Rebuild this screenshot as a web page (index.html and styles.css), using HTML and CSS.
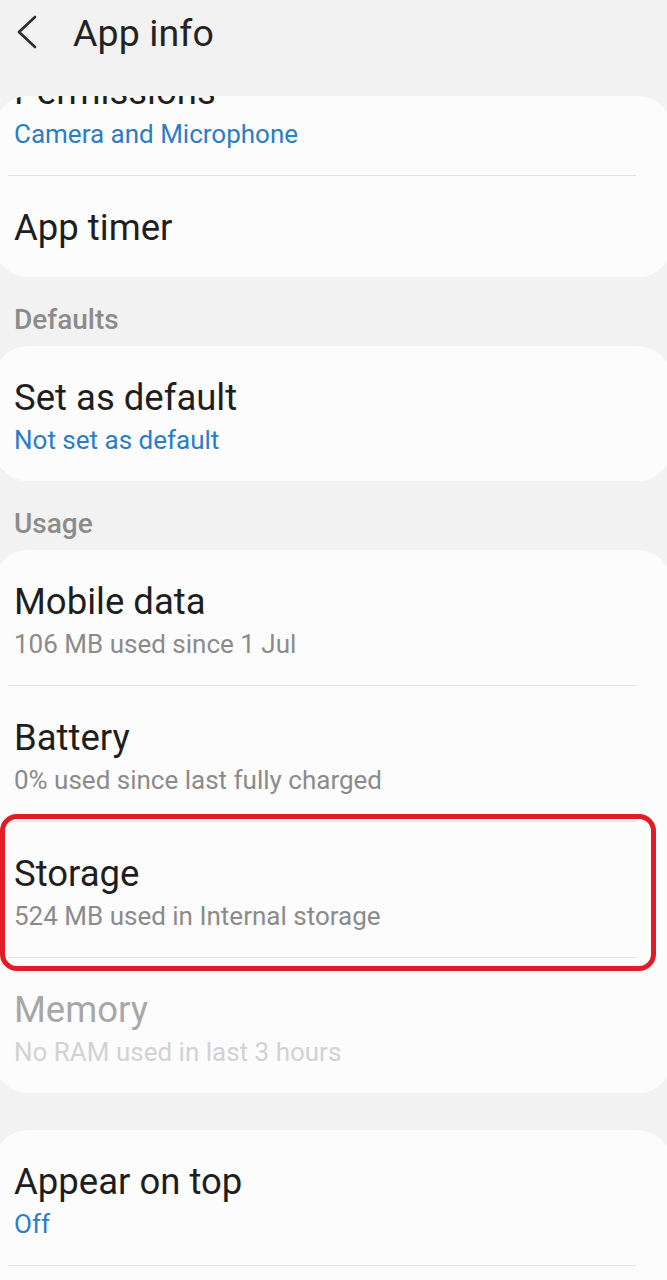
FILE: index.html
```html
<!DOCTYPE html>
<html lang="en">
<head>
<meta charset="utf-8">
<title>App info</title>
<link rel="stylesheet" href="styles.css">
</head>
<body>
<header class="appbar">
  <svg class="back" width="24" height="36" viewBox="0 0 24 36" aria-hidden="true">
    <polyline points="19,2 3,17 19,32" fill="none" stroke="#2a2a2a" stroke-width="2.6" stroke-linecap="round" stroke-linejoin="round"/>
  </svg>
  <h1 class="appbar-title">App info</h1>
</header>
<main class="content">
  <section class="card card-first">
    <div class="row">
      <div class="title">Permissions</div>
      <div class="sub sub-blue">Camera and Microphone</div>
    </div>
    <div class="divider"></div>
    <div class="row row-single">
      <div class="title">App timer</div>
    </div>
  </section>

  <h2 class="section">Defaults</h2>
  <section class="card">
    <div class="row">
      <div class="title">Set as default</div>
      <div class="sub sub-blue">Not set as default</div>
    </div>
  </section>

  <h2 class="section">Usage</h2>
  <section class="card">
    <div class="row">
      <div class="title">Mobile data</div>
      <div class="sub">106 MB used since 1 Jul</div>
    </div>
    <div class="divider"></div>
    <div class="row">
      <div class="title">Battery</div>
      <div class="sub">0% used since last fully charged</div>
    </div>
    <div class="divider"></div>
    <div class="row row-highlighted">
      <div class="title">Storage</div>
      <div class="sub">524 MB used in Internal storage</div>
      <div class="highlight"></div>
    </div>
    <div class="divider"></div>
    <div class="row row-disabled">
      <div class="title">Memory</div>
      <div class="sub">No RAM used in last 3 hours</div>
    </div>
  </section>

  <section class="card card-last">
    <div class="row">
      <div class="title">Appear on top</div>
      <div class="sub sub-blue">Off</div>
    </div>
    <div class="divider"></div>
  </section>
</main>
</body>
</html>
```

FILE: styles.css
```css
html, body {
  margin: 0;
  padding: 0;
}

body {
  width: 667px;
  height: 1280px;
  overflow: hidden;
  background: #f2f2f2;
  font-family: Roboto, "Noto Sans", "Liberation Sans", sans-serif;
  color: #1e1e1e;
}

.appbar {
  height: 96px;
  display: flex;
  align-items: flex-start;
  background: #f2f2f2;
  box-sizing: border-box;
  padding: 14px 0 0 16px;
  position: relative;
  z-index: 2;
}

.back {
  display: block;
  margin-top: 1px;
}

.appbar-title {
  margin: -3px 0 0 33px;
  font-size: 37.5px;
  font-weight: 400;
  line-height: 44px;
  color: #232323;
  letter-spacing: 0.1px;
}

.content {
  margin: 0 -5px 0 -6px;
  height: 1184px;
  overflow: hidden;
  border-radius: 34px 34px 0 0;
}

.card {
  background: #fcfcfc;
  border-radius: 34px;
}

.card-first {
  margin-top: -56px;
}

.card-last {
  margin-top: 37px;
  padding-bottom: 80px;
  border-radius: 34px 34px 0 0;
}

.row {
  padding: 31px 20px 20px 20px;
  position: relative;
}

.row-single {
  padding: 31px 20px 28px 20px;
}

.title {
  font-size: 36.5px;
  line-height: 42px;
  color: #1e1e1e;
}

.sub {
  font-size: 26px;
  line-height: 42px;
  color: #8b8b8b;
}

.sub-blue {
  color: #2a7ec6;
}

.row-disabled .title {
  color: #a7a7a7;
}

.row-disabled .sub {
  color: #d2d2d2;
}

.divider {
  height: 1px;
  background: #e2e2e2;
  margin: 0 36px 0 14px;
}

.section {
  margin: 0;
  padding: 26px 20px 9px 20px;
  font-size: 28px;
  font-weight: 500;
  line-height: 34px;
  color: #8c8c8c;
}

.highlight {
  position: absolute;
  top: -8px;
  left: 6px;
  right: 16px;
  bottom: -14px;
  border: 5px solid #e21c24;
  border-radius: 17px;
  z-index: 1;
  pointer-events: none;
}
```
